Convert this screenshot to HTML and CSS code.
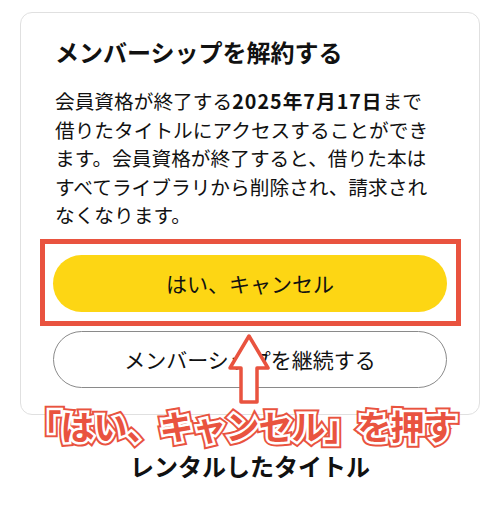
FILE: index.html
```html
<html lang="ja">
    <head>
        <meta charset="UTF-8">
        <title>メンバーシップを解約する</title>
        <meta name="viewport" content="width=device-width, initial-scale=1">
        <link rel="stylesheet" href="styles.css">
    </head>
    <body>
        <div class="dialog">
            <h2 class="dialog-title">メンバーシップを解約する</h2>
            <p class="dialog-text">会員資格が終了する<b>2025年7月17日</b>まで借りたタイトルにアクセスすることができます。会員資格が終了すると、借りた本はすべてライブラリから削除され、請求されなくなります。</p>
            <div class="btn-wrap">
                <div class="btn btn-yes">はい、キャンセル</div>
                <span class="highlight"></span>
            </div>
            <div class="btn btn-keep">メンバーシップを継続する</div>
        </div>
        <svg class="arrow" width="50" height="74" viewBox="0 0 50 74">
            <path d="M25 2 L44 34 L33 34 L33 68 L17 68 L17 34 L6 34 Z" fill="#fff" stroke="#e9533f" stroke-width="3.5" stroke-linejoin="round"/>
        </svg>
        <div class="note" data-text="「はい、キャンセル」を押す"><span>「はい、キャンセル」を押す</span></div>
        <div class="next-title">レンタルしたタイトル</div>
    </body>
</html>
```

FILE: styles.css
```css
body{
    margin: 0;
    padding: 0;
    background: #fff;
    position: relative;
    font-family: "Noto Sans CJK JP", "Noto Sans", sans-serif;
    color: #111;
}
.dialog{
    margin: 12px 20px 0 20px;
    width: 460px;
    height: 403px;
    box-sizing: border-box;
    border: 1.5px solid #e0e0e0;
    border-radius: 12px;
    padding: 24px 32px 0 32px;
}
.dialog-title{
    margin: 0 0 0 2px;
    font-size: 24px;
    line-height: 30px;
    font-weight: bold;
}
.dialog-text{
    margin: 20px 0 0 2px;
    width: 377px;
    font-size: 19.7px;
    line-height: 28.5px;
}
.dialog-text b{
    font-weight: bold;
    letter-spacing: 1px;
}
.btn-wrap{
    position: relative;
    margin-top: 25px;
}
.btn{
    height: 57px;
    border-radius: 29px;
    display: flex;
    align-items: center;
    justify-content: center;
    font-size: 21px;
    box-sizing: border-box;
}
.btn-yes{
    background: #fdd614;
}
.btn-keep{
    margin-top: 19px;
    border: 1.5px solid #8a8a8a;
}
.highlight{
    position: absolute;
    left: -13px;
    top: -16px;
    right: -14px;
    bottom: -14px;
    border: 5px solid #e9533f;
}
.arrow{
    position: absolute;
    left: 224px;
    top: 334px;
}
.note{
    position: relative;
    margin-top: -7px;
    padding-right: 16px;
    text-align: center;
    font-size: 34px;
    line-height: 36px;
    font-weight: bold;
    letter-spacing: -1px;
}
.note:before{
    content: attr(data-text);
    position: absolute;
    left: 0;
    right: 16px;
    top: 0;
    color: #e9533f;
    -webkit-text-stroke: 9px #e9533f;
}
.note span{
    position: relative;
    color: #e9533f;
    -webkit-text-stroke: 5px #fff;
    paint-order: stroke fill;
}
.next-title{
    margin-top: 8px;
    text-align: center;
    font-size: 24px;
    line-height: 28px;
    font-weight: bold;
}
```
